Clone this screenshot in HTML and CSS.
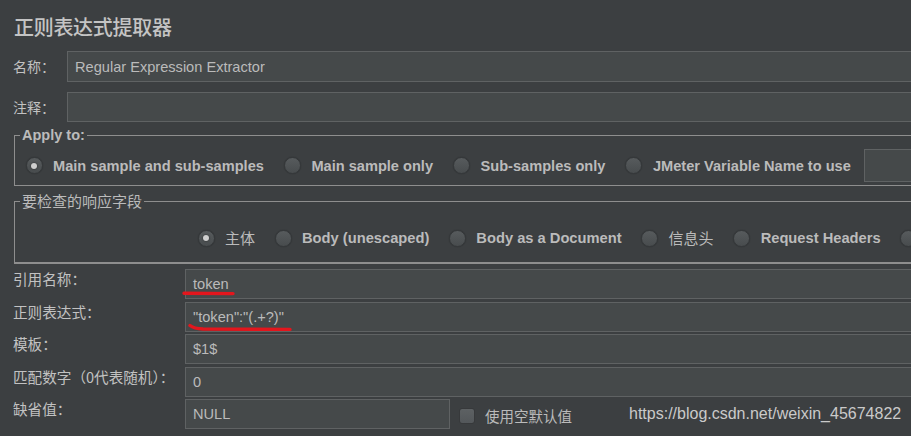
FILE: index.html
```html
<!DOCTYPE html>
<html lang="zh-CN">
<head>
	<meta charset="UTF-8">
	<title>正则表达式提取器</title>
	<link rel="stylesheet" href="styles.css">
</head>
<body>
	<div class="page">
		<h1 class="title">正则表达式提取器</h1>

		<!-- 名称 / 注释 -->
		<div class="top-row">
			<span class="label">名称：</span>
			<div class="field">Regular Expression Extractor</div>
		</div>
		<div class="top-row">
			<span class="label">注释：</span>
			<div class="field"></div>
		</div>

		<!-- Apply to -->
		<fieldset class="group apply">
			<legend>Apply to:</legend>
			<div class="radios">
				<span class="radio checked"><i></i>Main sample and sub-samples</span>
				<span class="radio"><i></i>Main sample only</span>
				<span class="radio"><i></i>Sub-samples only</span>
				<span class="radio"><i></i>JMeter Variable Name to use</span>
				<div class="field var-field"></div>
			</div>
		</fieldset>

		<!-- 要检查的响应字段 -->
		<fieldset class="group check">
			<legend>要检查的响应字段</legend>
			<div class="radios">
				<span class="radio checked cjk"><i></i>主体</span>
				<span class="radio"><i></i>Body (unescaped)</span>
				<span class="radio"><i></i>Body as a Document</span>
				<span class="radio cjk"><i></i>信息头</span>
				<span class="radio"><i></i>Request Headers</span>
				<span class="radio"><i></i></span>
			</div>
		</fieldset>

		<!-- 提取参数 -->
		<div class="params">
			<span class="label">引用名称：</span>
			<div class="field">token</div>
			<span class="label">正则表达式：</span>
			<div class="field">"token":"(.+?)"</div>
			<span class="label">模板：</span>
			<div class="field">$1$</div>
			<span class="label">匹配数字（0代表随机）：</span>
			<div class="field">0</div>
			<span class="label">缺省值：</span>
			<div class="last">
				<div class="field null-field">NULL</div>
				<span class="checkbox"></span>
				<span class="check-text">使用空默认值</span>
			</div>
		</div>

		<!-- 红色标注 -->
		<svg class="marks" width="130" height="60" viewBox="180 280 130 60">
			<path d="M184 293.3 L233 293.6" />
			<path d="M190 325.5 Q194 328.6 203 329 L290 329.4" />
		</svg>

		<div class="watermark">https://blog.csdn.net/weixin_45674822</div>
	</div>
</body>
</html>
```

FILE: styles.css
```css
* {
	margin: 0;
	padding: 0;
	box-sizing: border-box;
}
body {
	background: #3c3f41;
	color: #bbbbbb;
	font: normal 14px/20px "Noto Sans CJK SC", sans-serif;
	overflow: hidden;
}
.page {
	position: relative;
	width: 980px;
	height: 436px;
	padding-left: 13px;
}
.title {
	padding-top: 13px;
	margin-bottom: 10px;
	margin-left: 1px;
	font-size: 20px;
	line-height: 28px;
	font-weight: 500;
	letter-spacing: -0.3px;
	color: #c4c4c4;
}
.label {
	color: #c2c2c2;
}

/* 输入框 */
.field {
	display: flex;
	align-items: center;
	height: 100%;
	padding: 0 7px;
	background: #45494a;
	border: 1px solid #5f6263;
	font: normal 14.6px/20px "Liberation Sans", Arial, sans-serif;
	color: #bbbbbb;
}
.top-row {
	display: flex;
	height: 31px;
	margin-bottom: 10px;
}
.top-row .label {
	width: 54px;
	line-height: 31px;
}
.top-row .field {
	flex: 1;
}
.top-row + .top-row {
	height: 30px;
	margin-bottom: 0;
}

/* 分组框 */
.group {
	margin-left: 1px;
	border: 1px solid #8e8e8e;
	border-right: none;
}
.group legend {
	margin-left: 5px;
	padding: 0 2px;
	font: bold 14.5px/16px "Liberation Sans", "Noto Sans CJK SC", sans-serif;
}
.apply {
	margin-top: 5px;
	padding: 6px 0 3px 0;
}
.check {
	margin-top: 7px;
	padding: 19px 0 14px 0;
	border-bottom-width: 2px;
}
.check legend {
	font: normal 15px/16px "Noto Sans CJK SC", sans-serif;
}
.radios {
	display: flex;
	align-items: center;
	gap: 20px;
	padding-left: 10.5px;
	white-space: nowrap;
}
.apply .radios {
	height: 33px;
}
.check .radios {
	height: 20px;
	padding-left: 182.5px;
	gap: 19.5px;
}
.radio {
	display: inline-flex;
	align-items: center;
	gap: 10.5px;
	font: bold 14.6px/20px "Liberation Sans", Arial, sans-serif;
}
.check .radio {
	font-size: 14.7px;
}
.check .radio.cjk {
	font: normal 15px/20px "Noto Sans CJK SC", sans-serif;
}
.radio i {
	position: relative;
	width: 17px;
	height: 17px;
	flex: none;
	border-radius: 50%;
	background: linear-gradient(to bottom, #575b5d, #484c4e);
	border: 1px solid #35383a;
	box-shadow: 0 0 1px rgba(0, 0, 0, .4);
}
.radio.checked i:after {
	content: " ";
	position: absolute;
	top: 50%;
	left: 50%;
	width: 6px;
	height: 6px;
	margin: -3px 0 0 -3px;
	border-radius: 50%;
	background: #cfcfcf;
	box-shadow: 0 0 2px rgba(0, 0, 0, .6);
}
.var-field {
	width: 100px;
	height: 33px;
	margin-left: -7px;
}

/* 提取参数 */
.params {
	display: grid;
	grid-template-columns: 172px 1fr;
	grid-auto-rows: 30px;
	row-gap: 2.5px;
	margin-top: 5px;
}
.params .label {
	font-size: 14.6px;
	line-height: 20px;
}
.last {
	display: flex;
	align-items: center;
}
.null-field {
	width: 265px;
	flex: none;
}
.checkbox {
	width: 16px;
	height: 16px;
	margin-left: 9px;
	margin-top: 3px;
	border-radius: 3px;
	background: linear-gradient(to bottom, #5d6163, #53575a);
	border: 1px solid #37393b;
}
.check-text {
	margin-left: 10px;
	margin-top: 3px;
	font-size: 14.5px;
}

/* 标注与水印 */
.marks {
	position: absolute;
	left: 180px;
	top: 280px;
}
.marks path {
	fill: none;
	stroke: #e3161d;
	stroke-width: 3.4;
	stroke-linecap: round;
}
.watermark {
	position: absolute;
	left: 629px;
	top: 404px;
	font: normal 16px/20px "Liberation Sans", Arial, sans-serif;
	color: #cacaca;
}
```
